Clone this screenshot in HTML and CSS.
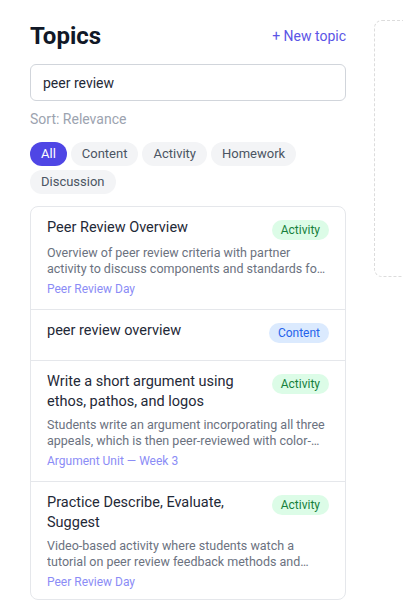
FILE: index.html
```html
<!DOCTYPE html>
<html lang="en">
<head>
    <meta charset="UTF-8">
    <meta name="viewport" content="width=device-width, initial-scale=1.0">
    <title>Topics</title>
    <link rel="stylesheet" href="styles.css">
</head>
<body>
    <div class="page">
        <div class="list-pane">
            <div class="header">
                <h1>Topics</h1>
                <a href="#" class="new-topic">+ New topic</a>
            </div>

            <input type="text" class="search" value="peer review">
            <div class="sort">Sort: Relevance</div>

            <div class="chips">
                <span class="chip active">All</span>
                <span class="chip">Content</span>
                <span class="chip">Activity</span>
                <span class="chip">Homework</span>
                <span class="chip">Discussion</span>
            </div>

            <ul class="topics">
                <li class="topic">
                    <div class="topic-head">
                        <div class="topic-title">Peer Review Overview</div>
                        <span class="badge activity">Activity</span>
                    </div>
                    <div class="topic-desc">Overview of peer review criteria with partner activity to discuss components and standards for giving useful feedback to classmates.</div>
                    <div class="topic-meta">Peer Review Day</div>
                </li>
                <li class="topic">
                    <div class="topic-head">
                        <div class="topic-title">peer review overview</div>
                        <span class="badge content">Content</span>
                    </div>
                    <div class="topic-desc"></div>
                </li>
                <li class="topic">
                    <div class="topic-head">
                        <div class="topic-title">Write a short argument using ethos, pathos, and logos</div>
                        <span class="badge activity">Activity</span>
                    </div>
                    <div class="topic-desc">Students write an argument incorporating all three appeals, which is then peer-reviewed with color-coded highlighting of each appeal.</div>
                    <div class="topic-meta">Argument Unit — Week 3</div>
                </li>
                <li class="topic last">
                    <div class="topic-head">
                        <div class="topic-title">Practice Describe, Evaluate, Suggest</div>
                        <span class="badge activity">Activity</span>
                    </div>
                    <div class="topic-desc">Video-based activity where students watch a tutorial on peer review feedback methods and apply them to a sample essay.</div>
                    <div class="topic-meta">Peer Review Day</div>
                </li>
            </ul>
        </div>

        <div class="preview-pane"></div>
    </div>
</body>
</html>
```

FILE: styles.css
```css
body {
    font-family: Roboto, "Noto Sans", sans-serif;
    background-color: #fff;
    color: #1f2937;
    margin: 0;
    padding: 0;
    overflow: hidden;
}

.page {
    display: flex;
    align-items: flex-start;
    gap: 28px;
    padding: 20px 0 0 30px;
}

.list-pane {
    width: 316px;
    flex-shrink: 0;
}

.header {
    display: flex;
    justify-content: space-between;
    align-items: center;
    height: 32px;
}

h1 {
    margin: 0;
    font-size: 24px;
    font-weight: bold;
    color: #111827;
}

.new-topic {
    color: #5b55e6;
    font-size: 14px;
    text-decoration: none;
}

.search {
    display: block;
    width: 100%;
    height: 37px;
    margin-top: 12px;
    padding: 0 12px;
    box-sizing: border-box;
    border: 1px solid #d1d5db;
    border-radius: 6px;
    font-family: inherit;
    font-size: 14px;
    color: #1f2937;
}

.sort {
    margin-top: 9px;
    font-size: 14px;
    line-height: 18px;
    color: #9ca3af;
}

.chips {
    display: flex;
    flex-wrap: wrap;
    gap: 4px;
    margin-top: 14px;
}

.chip {
    height: 24px;
    line-height: 24px;
    padding: 0 11px;
    border-radius: 12px;
    background-color: #f3f4f6;
    color: #4b5563;
    font-size: 13px;
}

.chip.active {
    background-color: #4f46e5;
    color: #fff;
}

.topics {
    list-style: none;
    margin: 12px 0 0;
    padding: 0;
    border: 1px solid #e5e7eb;
    border-radius: 8px;
}

.topic {
    padding: 11px 16px 12px;
    border-top: 1px solid #e5e7eb;
}

.topic:first-child {
    border-top: none;
}

.topic.last {
    padding-bottom: 9px;
}

.topic-head {
    display: flex;
    justify-content: space-between;
    align-items: flex-start;
    gap: 12px;
}

.topic-title {
    font-size: 14.5px;
    line-height: 20px;
    color: #1f2937;
}

.badge {
    flex-shrink: 0;
    margin-top: 2px;
    height: 20px;
    line-height: 20px;
    padding: 0 9px;
    border-radius: 10px;
    font-size: 12px;
}

.badge.activity {
    background-color: #dcfce7;
    color: #16803c;
}

.badge.content {
    background-color: #dbeafe;
    color: #2563eb;
}

.topic-desc {
    max-width: 280px;
    margin-top: 5px;
    font-size: 12.5px;
    line-height: 16px;
    color: #6b7280;
    display: -webkit-box;
    -webkit-line-clamp: 2;
    -webkit-box-orient: vertical;
    overflow: hidden;
}

.topic-meta {
    margin-top: 4px;
    font-size: 12px;
    line-height: 16px;
    color: #8b8cf6;
}

.preview-pane {
    width: 300px;
    height: 255px;
    flex-shrink: 0;
    border: 1px dashed #dcdcdc;
    border-radius: 8px;
}
```
